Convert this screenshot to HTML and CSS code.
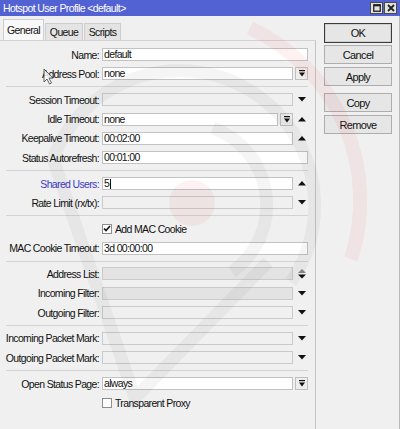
FILE: index.html
```html
<!DOCTYPE html>
<html>
<head>
<meta charset="utf-8">
<title>Hotspot User Profile</title>
<link rel="stylesheet" href="styles.css">
</head>
<body>
<div class="window">
  <div class="titlebar">
    <span class="title">Hotspot User Profile &lt;default&gt;</span>
    <div class="wctl">
      <span class="wbtn"><svg width="8" height="8" viewBox="0 0 8 8"><rect x="0.75" y="0.75" width="6.5" height="6.5" fill="none" stroke="#222" stroke-width="1.3"/><rect x="0.75" y="0.75" width="6.5" height="1.6" fill="#222"/></svg></span>
      <span class="wbtn"><svg width="8" height="8" viewBox="0 0 8 8"><path d="M1 1 L7 7 M7 1 L1 7" stroke="#222" stroke-width="1.8"/></svg></span>
    </div>
  </div>
  <div class="content">
    <div class="main">
      <div class="tabs">
        <div class="tab active">General</div>
        <div class="tab t-queue">Queue</div>
        <div class="tab t-scripts">Scripts</div>
      </div>
      <div class="panel">
        <div class="row"><span class="lbl">Name:</span><span class="f w206">default</span></div>
        <div class="row"><span class="lbl">Address Pool:</span><span class="f w191">none</span><span class="dd"><svg width="6" height="7" viewBox="0 0 6 7"><rect x="0" y="0" width="6" height="1.2" fill="#111"/><path d="M0 2.6 H6 L3 6.6 Z" fill="#111"/></svg></span></div>
        <div class="sep"></div>
        <div class="row"><span class="lbl">Session Timeout:</span><span class="f w191 dis"></span><span class="arr"><svg width="8" height="5" viewBox="0 0 8 5"><path d="M0 0 H8 L4 4.5 Z" fill="#111"/></svg></span></div>
        <div class="row"><span class="lbl">Idle Timeout:</span><span class="f w176">none</span><span class="dd"><svg width="6" height="7" viewBox="0 0 6 7"><rect x="0" y="0" width="6" height="1.2" fill="#111"/><path d="M0 2.6 H6 L3 6.6 Z" fill="#111"/></svg></span><span class="arr"><svg width="8" height="5" viewBox="0 0 8 5"><path d="M0 4.5 H8 L4 0 Z" fill="#111"/></svg></span></div>
        <div class="row"><span class="lbl">Keepalive Timeout:</span><span class="f w191">00:02:00</span><span class="arr"><svg width="8" height="5" viewBox="0 0 8 5"><path d="M0 4.5 H8 L4 0 Z" fill="#111"/></svg></span></div>
        <div class="row"><span class="lbl">Status Autorefresh:</span><span class="f w206">00:01:00</span></div>
        <div class="sep"></div>
        <div class="row"><span class="lbl blue">Shared Users:</span><span class="f w191">5<span class="caret"></span></span><span class="arr"><svg width="8" height="5" viewBox="0 0 8 5"><path d="M0 4.5 H8 L4 0 Z" fill="#111"/></svg></span></div>
        <div class="row"><span class="lbl">Rate Limit (rx/tx):</span><span class="f w191 dis"></span><span class="arr"><svg width="8" height="5" viewBox="0 0 8 5"><path d="M0 0 H8 L4 4.5 Z" fill="#111"/></svg></span></div>
        <div class="sep"></div>
        <div class="row cbrow"><span class="cb"><svg width="8" height="7" viewBox="0 0 8 7"><path d="M1 3.5 L3 5.5 L7 1" fill="none" stroke="#111" stroke-width="1.6"/></svg></span><span>Add MAC Cookie</span></div>
        <div class="row"><span class="lbl">MAC Cookie Timeout:</span><span class="f w206">3d 00:00:00</span></div>
        <div class="sep"></div>
        <div class="row"><span class="lbl">Address List:</span><span class="f w191 dis dark"></span><span class="arr"><svg width="8" height="10" viewBox="0 0 8 10"><path d="M0 4 H8 L4 0 Z" fill="#8a8a8a"/><path d="M0 5.5 H8 L4 9.5 Z" fill="#111"/></svg></span></div>
        <div class="row"><span class="lbl">Incoming Filter:</span><span class="f w191 dis dark"></span><span class="arr"><svg width="8" height="5" viewBox="0 0 8 5"><path d="M0 0 H8 L4 4.5 Z" fill="#111"/></svg></span></div>
        <div class="row"><span class="lbl">Outgoing Filter:</span><span class="f w191 dis"></span><span class="arr"><svg width="8" height="5" viewBox="0 0 8 5"><path d="M0 0 H8 L4 4.5 Z" fill="#111"/></svg></span></div>
        <div class="sep"></div>
        <div class="row"><span class="lbl">Incoming Packet Mark:</span><span class="f w191 dis"></span><span class="arr"><svg width="8" height="5" viewBox="0 0 8 5"><path d="M0 0 H8 L4 4.5 Z" fill="#111"/></svg></span></div>
        <div class="row"><span class="lbl">Outgoing Packet Mark:</span><span class="f w191 dis"></span><span class="arr"><svg width="8" height="5" viewBox="0 0 8 5"><path d="M0 0 H8 L4 4.5 Z" fill="#111"/></svg></span></div>
        <div class="sep"></div>
        <div class="row"><span class="lbl">Open Status Page:</span><span class="f w191">always</span><span class="dd"><svg width="6" height="7" viewBox="0 0 6 7"><rect x="0" y="0" width="6" height="1.2" fill="#111"/><path d="M0 2.6 H6 L3 6.6 Z" fill="#111"/></svg></span></div>
        <div class="row cbrow"><span class="cb"></span><span>Transparent Proxy</span></div>
      </div>
    </div>
    <div class="side">
      <div class="btn ok">OK</div>
      <div class="btn b-cancel">Cancel</div>
      <div class="btn b-apply">Apply</div>
      <div class="btn b-copy">Copy</div>
      <div class="btn b-remove">Remove</div>
    </div>
  </div>
  <svg class="wm" width="400" height="429" viewBox="0 0 400 429">
    <g fill="none" stroke="#000" stroke-opacity="0.04" stroke-width="13" stroke-linejoin="miter">
      <path d="M213 128 A82 82 0 0 1 232 272"/>
      <path d="M53 159 A135 135 0 1 1 291 282"/>
      <path d="M53 159 L135 398 L268 262"/>
    </g>
    <path d="M250 28 A190 190 0 0 1 351 259" fill="none" stroke="#e02828" stroke-opacity="0.065" stroke-width="14"/>
    <circle cx="192" cy="203" r="23" fill="#e02828" fill-opacity="0.06"/>
    <path transform="translate(44 69)" d="M0 0 L0 13 L3 10 L5.5 15 L7.5 14 L5 9.2 L9 9.2 Z" fill="#fff" stroke="#333" stroke-width="0.9" stroke-linejoin="round" opacity="0.85"/>
  </svg>
</div>
</body>
</html>
```
FILE: styles.css
```css
* { box-sizing: border-box; }
html, body { margin: 0; padding: 0; }
body {
  background: #f0f0f0;
  font-family: "Liberation Sans", Arial, sans-serif;
  font-size: 10.5px;
  letter-spacing: -0.65px;
  color: #111;
}
.window {
  position: relative;
  width: 400px;
  height: 429px;
  overflow: hidden;
  background: #f0f0f0;
}
.titlebar {
  height: 16px;
  background: #5262d3;
  color: #fff;
  display: flex;
  align-items: center;
  justify-content: space-between;
  padding: 0 3px 0 3px;
}
.title { font-size: 10.5px; letter-spacing: -0.6px; }
.wctl { display: flex; gap: 1px; }
.wbtn {
  width: 13px;
  height: 12px;
  background: #e2e2e2;
  border: 1px solid #4a4a4a;
  display: flex;
  align-items: center;
  justify-content: center;
}
.content {
  display: flex;
  height: 413px;
  border-right: 1px solid #b8b8b8;
}
.main {
  width: 316px;
  display: flex;
  flex-direction: column;
}
.tabs {
  height: 24px;
  display: flex;
  align-items: flex-end;
  padding-left: 3px;
  gap: 1px;
}
.tab {
  height: 17px;
  border: 1px solid #cdcdcd;
  border-bottom: none;
  background: #e4e4e4;
  display: flex;
  align-items: center;
  justify-content: center;
}
.tab.active { width: 41px; height: 21px; background: #f8f8f8; }
.t-queue { width: 38px; }
.t-scripts { width: 37px; }
.panel {
  flex: 1;
  border-top: 1px solid #d2d2d2;
  border-right: 1px solid #c4c4c4;
  padding-top: 4px;
}
.row {
  display: flex;
  align-items: center;
  height: 19.33px;
}
.lbl {
  width: 99px;
  margin-right: 3px;
  text-align: right;
  white-space: nowrap;
}
.blue { color: #3a3ac6; }
.f {
  height: 13px;
  border: 1px solid #c2c2c2;
  background: #fff;
  padding-left: 1px;
  line-height: 11px;
  white-space: nowrap;
  overflow: hidden;
  display: flex;
  align-items: center;
}
.w206 { width: 206px; }
.w191 { width: 191px; }
.w176 { width: 176px; }
.dis { background: #f0f0f0; border-color: #cacaca; }
.dark { background: #e3e3e3; }
.caret {
  display: inline-block;
  width: 1px;
  height: 10px;
  background: #111;
  margin-left: 0.5px;
}
.dd {
  width: 13px;
  height: 13px;
  margin-left: 2px;
  border: 1px solid #c0c0c0;
  background: #ededed;
  display: flex;
  align-items: center;
  justify-content: center;
}
.arr {
  width: 12px;
  margin-left: 3px;
  display: flex;
  align-items: center;
  justify-content: center;
}
.sep {
  height: 6.5px;
  display: flex;
  align-items: center;
  padding: 0 7px 0 6px;
}
.sep::after {
  content: "";
  flex: 1;
  border-top: 1px solid #d3d3d3;
}
.cbrow { padding-left: 102px; }
.cb {
  width: 10px;
  height: 10px;
  margin-right: 3px;
  border: 1px solid #8e8e8e;
  background: #fff;
  display: flex;
  align-items: center;
  justify-content: center;
}
.side {
  display: flex;
  flex-direction: column;
  padding: 7px 0 0 8px;
}
.btn {
  width: 68px;
  height: 19px;
  border: 1px solid #adadad;
  background: #e6e6e6;
  display: flex;
  align-items: center;
  justify-content: center;
  font-size: 11px;
}
.ok { height: 20px; border-color: #3c3c3c; box-shadow: inset 0 0 0 1px #d0d0d0; }
.b-cancel { margin-top: 2px; }
.b-apply { margin-top: 3px; }
.b-copy { margin-top: 7px; }
.b-remove { margin-top: 3px; }
.wm {
  position: absolute;
  top: 0;
  left: 0;
  pointer-events: none;
}
```
